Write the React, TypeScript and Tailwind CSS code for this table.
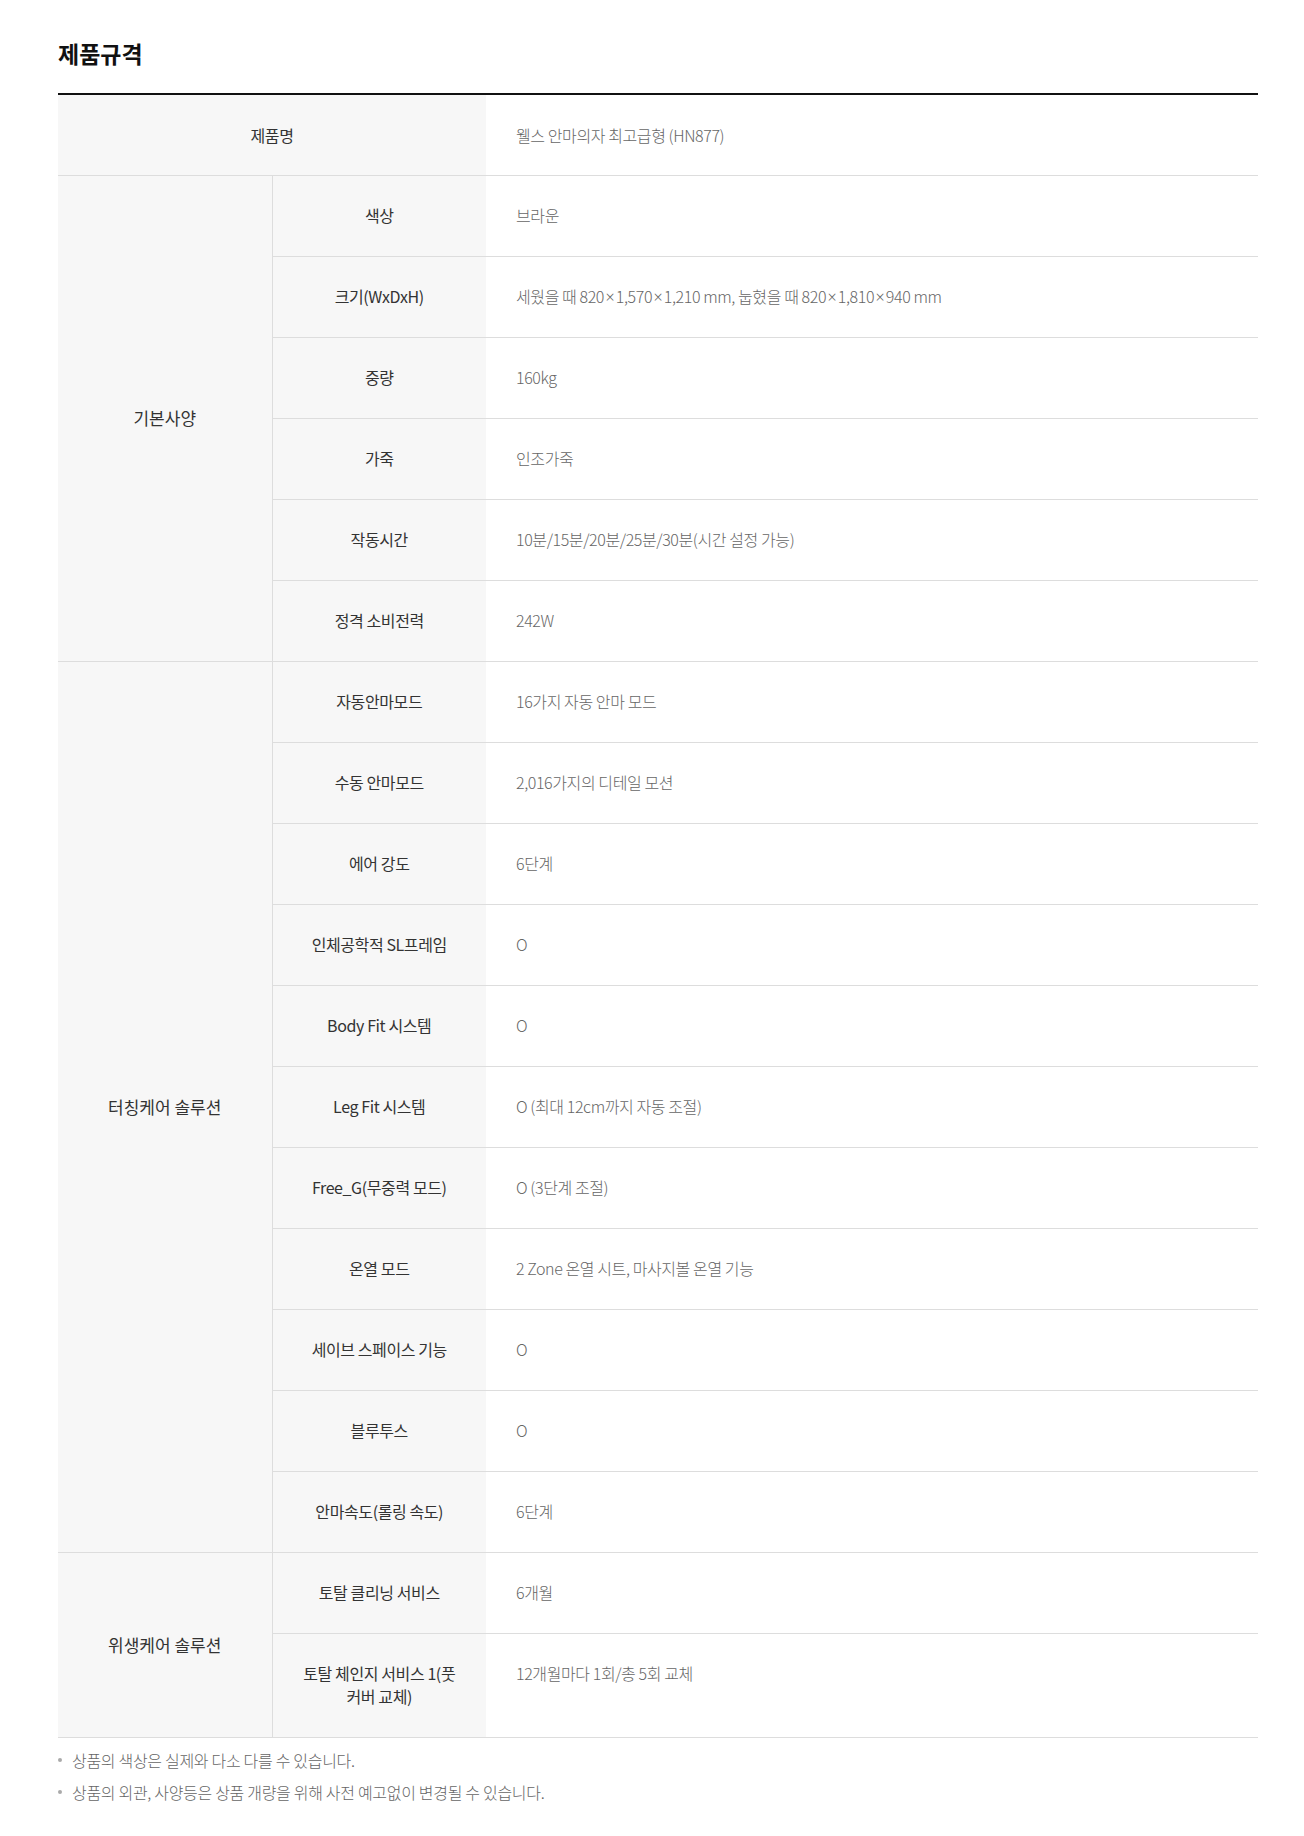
import React from "react";

type Row = { label: string; value: React.ReactNode };
type Group = { title: string; rows: Row[] };

// Noto CJK draws × full-width; the reference uses a narrow Latin one
const X = () => (
  <span className="mx-[1.5px] font-['Noto_Sans'] text-[16px] leading-none">×</span>
);

const groups: Group[] = [
  {
    title: "기본사양",
    rows: [
      { label: "색상", value: "브라운" },
      {
        label: "크기(WxDxH)",
        value: (
          <>
            세웠을 때 820<X />1,570<X />1,210 mm, 눕혔을 때 820<X />1,810<X />940 mm
          </>
        ),
      },
      { label: "중량", value: "160kg" },
      { label: "가죽", value: "인조가죽" },
      { label: "작동시간", value: "10분/15분/20분/25분/30분(시간 설정 가능)" },
      { label: "정격 소비전력", value: "242W" },
    ],
  },
  {
    title: "터칭케어 솔루션",
    rows: [
      { label: "자동안마모드", value: "16가지 자동 안마 모드" },
      { label: "수동 안마모드", value: "2,016가지의 디테일 모션" },
      { label: "에어 강도", value: "6단계" },
      { label: "인체공학적 SL프레임", value: "O" },
      { label: "Body Fit 시스템", value: "O" },
      { label: "Leg Fit 시스템", value: "O (최대 12cm까지 자동 조절)" },
      { label: "Free_G(무중력 모드)", value: "O (3단계 조절)" },
      { label: "온열 모드", value: "2 Zone 온열 시트, 마사지볼 온열 기능" },
      { label: "세이브 스페이스 기능", value: "O" },
      { label: "블루투스", value: "O" },
      { label: "안마속도(롤링 속도)", value: "6단계" },
    ],
  },
  {
    title: "위생케어 솔루션",
    rows: [
      { label: "토탈 클리닝 서비스", value: "6개월" },
      { label: "토탈 체인지 서비스 1(풋 커버 교체)", value: "12개월마다 1회/총 5회 교체" },
    ],
  },
];

const notes = [
  "상품의 색상은 실제와 다소 다를 수 있습니다.",
  "상품의 외관, 사양등은 상품 개량을 위해 사전 예고없이 변경될 수 있습니다.",
];

const App = () => {
  return (
    <div
      className="min-h-screen bg-white"
      style={{ fontFamily: '"Noto Sans CJK KR", "Noto Sans", sans-serif' }}
    >
      <div className="ml-[58px] w-[1200px] pt-[36px] pb-10">
        {/* Title */}
        <h2 className="text-[23px] font-bold leading-[34px] text-[#111] mb-[23px]">제품규격</h2>

        {/* Spec table */}
        <table className="w-full border-collapse border-t-2 border-[#111]">
          <colgroup>
            <col className="w-[214px]" />
            <col className="w-[214px]" />
            <col />
          </colgroup>
          <tbody>
            <tr className="border-b border-[#ddd]">
              <th
                colSpan={2}
                className="h-[81px] bg-[#f7f7f7] text-[16px] tracking-[-0.4px] font-normal text-[#333] text-center"
              >
                제품명
              </th>
              <td className="h-[81px] pl-[30px] text-[16px] tracking-[-0.4px] font-light text-[#666]">
                웰스 안마의자 최고급형 (HN877)
              </td>
            </tr>
            {groups.map((g) =>
              g.rows.map((r, i) => (
                <tr key={g.title + r.label} className="border-b border-[#ddd]">
                  {i === 0 && (
                    <th
                      rowSpan={g.rows.length}
                      className="bg-[#f7f7f7] border-r border-[#ddd] text-[17px] font-normal text-[#333] text-center"
                    >
                      {g.title}
                    </th>
                  )}
                  <th className="h-[81px] bg-[#f7f7f7] px-[30px] pt-[28px] pb-[29px] align-top text-[16px] tracking-[-0.4px] font-normal leading-[23px] text-[#333] text-center">
                    {r.label}
                  </th>
                  <td className="h-[81px] pl-[30px] pt-[28px] pb-[29px] align-top text-[16px] tracking-[-0.4px] font-light leading-[23px] text-[#666]">
                    {r.value}
                  </td>
                </tr>
              ))
            )}
          </tbody>
        </table>

        {/* Notes */}
        <ul className="mt-[11px] flex flex-col gap-[9px] text-[16px] tracking-[-0.3px] font-light text-[#666]">
          {notes.map((n) => (
            <li key={n} className="flex items-center leading-[23px]">
              <span className="mr-[10px] h-[4px] w-[4px] rounded-full bg-[#aaa]" />
              <span>{n}</span>
            </li>
          ))}
        </ul>
      </div>
    </div>
  );
};

export default App;
